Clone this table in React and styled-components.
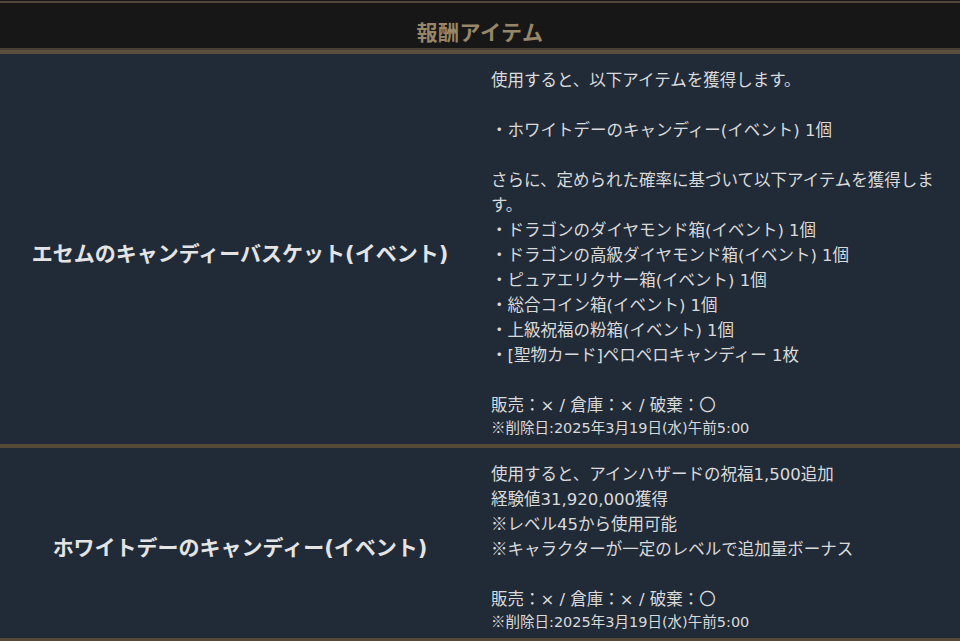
import React from "react";
import styled, { createGlobalStyle } from "styled-components";

const Global = createGlobalStyle`
  html, body { margin: 0; padding: 0; background: #212b38; }
  body { font-family: "DejaVu Sans", "Noto Sans CJK JP", sans-serif; }
`;

const Page = styled.div`
  width: 960px;
  background: #212b38;
  padding-top: 1px;
  background-clip: content-box;
  box-shadow: inset 0 1px 0 #181717;
`;

const Header = styled.div`
  box-sizing: border-box;
  height: 53px;
  background: #181717;
  border-top: 2px solid #54483c;
  border-bottom: 4px solid #5b4e3f;
  box-shadow: inset 0 -2px 0 #4a3f34;
  display: flex;
  justify-content: center;
  padding-top: 17px;
`;

const HeaderTitle = styled.h1`
  margin: 0;
  font-family: "Noto Sans CJK JP", sans-serif;
  font-size: 21px;
  line-height: 22px;
  font-weight: 700;
  color: #978667;
  letter-spacing: 0.5px;
`;

const Row = styled.div`
  display: grid;
  grid-template-columns: 480px 1fr;
  border-bottom: 4px solid #574938;
`;

const NameCell = styled.div`
  display: flex;
  align-items: center;
  justify-content: center;
  padding-top: 6px;
  font-size: 21px;
  font-weight: 700;
  color: #e4e4e4;
`;

const DescCell = styled.div`
  padding: 14px 10px 6px 11px;
  color: #dadada;
`;

const Line = styled.div`
  font-size: 16.5px;
  line-height: 25px;
  min-height: 25px;
`;

const Note = styled.div`
  font-size: 14.5px;
  line-height: 20px;
  height: 20px;
`;

const Mark = styled.span`
  font-family: "Noto Sans CJK JP", sans-serif;
  line-height: 1;
  vertical-align: baseline;
`;

const mark = (s) => {
  const parts = s.split("※");
  return parts.map((p, i) => (
    <React.Fragment key={i}>
      {i > 0 && <Mark>※</Mark>}
      {p}
    </React.Fragment>
  ));
};

const footer = ["販売：× / 倉庫：× / 破棄：〇"];
const note = "※削除日:2025年3月19日(水)午前5:00";

const items = [
  {
    name: "エセムのキャンディーバスケット(イベント)",
    lines: [
      "使用すると、以下アイテムを獲得します。",
      "",
      "・ホワイトデーのキャンディー(イベント) 1個",
      "",
      "さらに、定められた確率に基づいて以下アイテムを獲得します。",
      "・ドラゴンのダイヤモンド箱(イベント) 1個",
      "・ドラゴンの高級ダイヤモンド箱(イベント) 1個",
      "・ピュアエリクサー箱(イベント) 1個",
      "・総合コイン箱(イベント) 1個",
      "・上級祝福の粉箱(イベント) 1個",
      "・[聖物カード]ペロペロキャンディー 1枚",
      "",
      ...footer,
    ],
  },
  {
    name: "ホワイトデーのキャンディー(イベント)",
    lines: [
      "使用すると、アインハザードの祝福1,500追加",
      "経験値31,920,000獲得",
      "※レベル45から使用可能",
      "※キャラクターが一定のレベルで追加量ボーナス",
      "",
      ...footer,
    ],
  },
];

export default function App() {
  return (
    <Page>
      <Global />
      <Header>
        <HeaderTitle>報酬アイテム</HeaderTitle>
      </Header>
      {items.map((it) => (
        <Row key={it.name}>
          <NameCell>{it.name}</NameCell>
          <DescCell>
            {it.lines.map((l, i) => (
              <Line key={i}>{mark(l)}</Line>
            ))}
            <Note>{mark(note)}</Note>
          </DescCell>
        </Row>
      ))}
    </Page>
  );
}
